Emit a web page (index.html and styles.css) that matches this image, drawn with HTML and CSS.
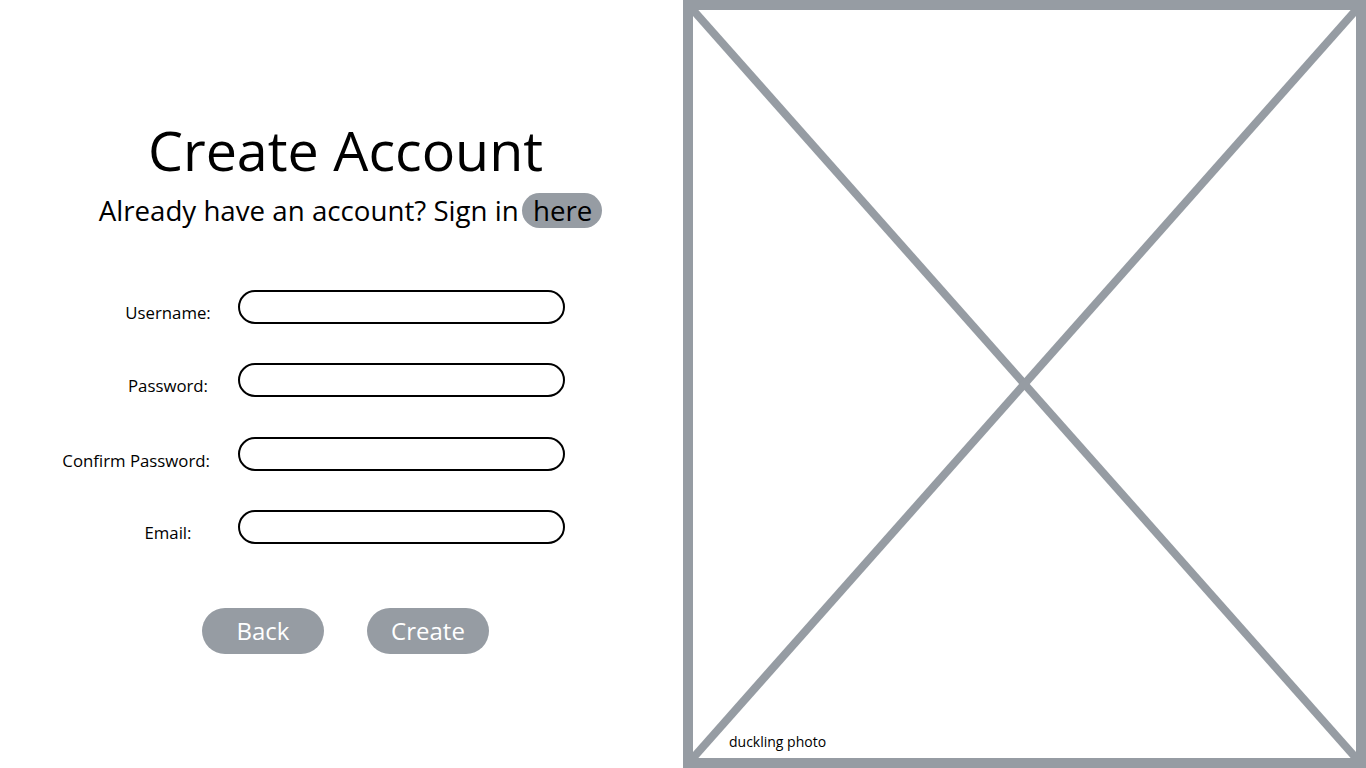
FILE: index.html
```html
<!DOCTYPE html>
<html>
<head>
<meta charset="utf-8">
<link rel="stylesheet" href="styles.css">
</head>
<body>
<div class="page">
  <main class="panel">
    <h1 class="title">Create Account</h1>
    <p class="subtitle">Already have an account? Sign in <a class="pill" href="#">here</a></p>
    <form class="form">
      <div class="row"><label class="label">Username:</label><input class="field" type="text"></div>
      <div class="row"><label class="label">Password:</label><input class="field" type="password"></div>
      <div class="row"><label class="label label-wide">Confirm Password:</label><input class="field" type="password"></div>
      <div class="row"><label class="label label-email">Email:</label><input class="field" type="email"></div>
      <div class="actions">
        <button class="btn" type="button">Back</button>
        <button class="btn" type="button">Create</button>
      </div>
    </form>
  </main>
  <aside class="photo">
    <svg class="cross" viewBox="0 0 100 100" preserveAspectRatio="none">
      <line x1="0" y1="0" x2="100" y2="100" vector-effect="non-scaling-stroke"/>
      <line x1="100" y1="0" x2="0" y2="100" vector-effect="non-scaling-stroke"/>
    </svg>
    <span class="caption">duckling photo</span>
  </aside>
</div>
</body>
</html>
```
FILE: styles.css
```css
html, body {
  margin: 0;
  padding: 0;
  background: #fff;
}
body {
  font-family: "Open Sans", "Noto Sans", sans-serif;
  color: #000;
}
.page {
  display: flex;
  width: 1366px;
  height: 768px;
}
.panel {
  width: 683px;
  flex: none;
  display: flex;
  flex-direction: column;
  align-items: center;
  padding-top: 113px;
  box-sizing: border-box;
}
.title {
  margin: 0;
  font-size: 55.6px;
  font-weight: 400;
  line-height: 74px;
  margin-left: 8px;
}
.subtitle {
  margin: 5px 0 0 0;
  font-size: 27.7px;
  line-height: 36px;
  margin-left: 18px;
}
.pill {
  display: inline-block;
  background: #969ca3;
  color: #000;
  text-decoration: none;
  border-radius: 18px;
  padding: 0 10px 0 11px;
  line-height: 35px;
  margin-left: -4px;
}
.form {
  align-self: stretch;
  display: flex;
  flex-direction: column;
  margin-top: 62px;
}
.row {
  display: flex;
  align-items: center;
  height: 33px;
  margin-bottom: 40.5px;
}
.label {
  width: 238px;
  box-sizing: border-box;
  padding-left: 98px;
  padding-right: 0;
  text-align: center;
  font-size: 16.8px;
  line-height: 22px;
  position: relative;
  top: 6px;
}
.label-wide {
  padding-left: 0;
  padding-right: 28px;
  text-align: right;
  top: 7px;
}
.label-email {
  top: 6px;
}
.field {
  width: 327px;
  height: 34px;
  box-sizing: border-box;
  border: 2px solid #000;
  border-radius: 17px;
  background: #fff;
  margin: 0;
  padding: 0 14px;
  font: inherit;
  outline: none;
}
.actions {
  display: flex;
  gap: 43px;
  margin-top: 24px;
  padding-left: 202px;
}
.btn {
  width: 122px;
  height: 46px;
  border: 0;
  border-radius: 23px;
  background: #969ca3;
  color: #fff;
  font-family: inherit;
  font-size: 24px;
  line-height: 46px;
  padding: 0;
}
.photo {
  flex: 1;
  position: relative;
  border: 10px solid #969ca3;
  box-sizing: border-box;
}
.cross {
  display: block;
  width: 100%;
  height: 100%;
}
.cross line {
  stroke: #969ca3;
  stroke-width: 8;
}
.caption {
  position: absolute;
  left: 36px;
  bottom: 6px;
  font-size: 14px;
  line-height: 20px;
}
```
